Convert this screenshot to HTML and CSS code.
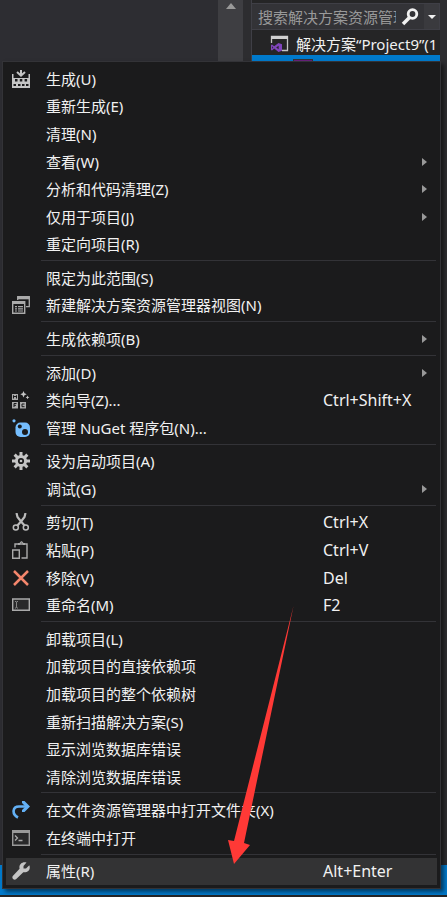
FILE: index.html
```html
<!DOCTYPE html>
<html lang="zh-CN">
<head>
<meta charset="utf-8">
<meta name="viewport" content="width=device-width, initial-scale=1">
<title>Project9</title>
<link rel="stylesheet" href="styles.css">
</head>
<body>
<main class="workspace">
  <section class="editor"></section>
  <div class="scrollbar"><span class="scroll-up"></span></div>
  <aside class="explorer">
    <form class="search">
      <input class="search-input" type="text" aria-label="搜索解决方案资源管理器" placeholder="搜索解决方案资源管理器(Ctrl+;)">
      <button class="search-button" type="button" aria-label="搜索">
        <svg width="18" height="18" viewBox="0 0 18 18"><circle cx="11.500" cy="6" r="4.300" fill="none" stroke="#f1f1f1" stroke-width="2.800"/><path d="M8.500 9.500L2 16" stroke="#f1f1f1" stroke-width="3.600"/></svg>
      </button>
      <button class="search-options" type="button" aria-label="搜索选项"><span class="caret"></span></button>
    </form>
    <div class="solution">
      <svg width="20" height="18" viewBox="0 0 20 18"><path d="M1.500 8V1.500h16v14H12" fill="none" stroke="#c5c5c5" stroke-width="1.300"/><path d="M1 1h17v3H1z" fill="#d0d0d0"/><path d="M8.500 8l3.500 1.200v6.600L8.500 17 4.200 13.600 2 15.500 1 15v-5l1-.6 2.200 1.900zM8.600 10.700L6.200 12.500l2.400 1.800zM2.200 11.300v2.400l1.100-1.200z" fill="#8145bd" fill-rule="evenodd"/></svg>
      <span>解决方案“Project9”(1</span>
    </div>
    <div class="selected-project"><span class="project-icon"></span></div>
  </aside>
</main>
<footer class="status"></footer>

<nav class="menu" aria-label="项目">
  <button class="item" type="button">
    <svg class="icon" viewBox="0 0 18 18"><path d="M9 0v5M5 2l4 3.700L13 2" fill="none" stroke="#c5c5c5" stroke-width="2"/><path d="M0 4h1.500v4H18V4v14H0z" fill="#c5c5c5"/><path d="M16.500 4H18v5h-1.500z" fill="#c5c5c5"/><path d="M3 9h2.500v2.500H3zM7.800 9h2.500v2.500H7.800zM12.600 9h2.500v2.500h-2.500zM1.500 14H4v2H1.500zM6 14h2.500v2H6zM10 14h2.500v2H10zM14 14h2.500v2H14z" fill="#1b1b1c"/></svg>
    <span class="label">生成(U)</span></button>
  <button class="item" type="button"><span class="label">重新生成(E)</span></button>
  <button class="item" type="button"><span class="label">清理(N)</span></button>
  <button class="item more" type="button"><span class="label">查看(W)</span></button>
  <button class="item more" type="button"><span class="label">分析和代码清理(Z)</span></button>
  <button class="item more" type="button"><span class="label">仅用于项目(J)</span></button>
  <button class="item" type="button"><span class="label">重定向项目(R)</span></button>
  <hr>
  <button class="item" type="button"><span class="label">限定为此范围(S)</span></button>
  <button class="item" type="button">
    <svg class="icon" viewBox="0 0 18 18"><path d="M5.700 4V.7h11.600v10H14" fill="none" stroke="#aaa" stroke-width="1.300"/><path d="M5.500 1h12v2.300h-12z" fill="#aaa"/><path d="M.7 5.700h12v11.600H.7z" fill="none" stroke="#aaa" stroke-width="1.400"/><path d="M1 6h11.500v2H1zM3 10h2v1.300H3zM6 10h5v1.300H6zM3 12.300h2v1.300H3zM6 12.300h5v1.300H6zM3 14.500h2v1H3zM6 14.500h5v1H6z" fill="#aaa"/></svg>
    <span class="label">新建解决方案资源管理器视图(N)</span></button>
  <hr>
  <button class="item more" type="button"><span class="label">生成依赖项(B)</span></button>
  <hr>
  <button class="item more" type="button"><span class="label">添加(D)</span></button>
  <button class="item" type="button">
    <svg class="icon" viewBox="0 0 18 18"><path d="M0 3h6v6H0zM0 11h6v6.500H0zM8 11h6v6.500H8z" fill="#aaa"/><path d="M1.500 7.500v-3l1.500 1.500 1.500-1.500v3M2 16v-3.500h2.500M2 14.300h2M12.500 13H10v2.700h2.500" fill="none" stroke="#1b1b1c"/><path d="M11.500 0l1 2.200 2.200 1-2.200 1-1 2.200-1-2.200-2.200-1 2.200-1zM15.500 4.500l.6 1.300 1.300.6-1.300.6-.6 1.300-.6-1.300-1.300-.6 1.300-.6z" fill="#c5c5c5"/></svg>
    <span class="label">类向导(Z)...</span><kbd>Ctrl+Shift+X</kbd></button>
  <button class="item" type="button">
    <svg class="icon" viewBox="0 0 18 18"><circle cx="2" cy="1.800" r="1.600" fill="#75beff"/><rect x="3.500" y="3.500" width="14.500" height="14.500" rx="5" fill="#75beff"/><circle cx="7.800" cy="7.500" r="2" fill="#1b1b1c"/><circle cx="13" cy="13" r="3" fill="#1b1b1c"/></svg>
    <span class="label">管理 NuGet 程序包(N)...</span></button>
  <hr>
  <button class="item" type="button">
    <svg class="icon" viewBox="0 0 18 18"><g stroke="#c5c5c5" stroke-width="3"><path d="M9 0v4M9 14v4M0 9h4M14 9h4M2.600 2.600l3 3M12.400 12.400l3 3M2.600 15.400l3-3M12.400 5.600l3-3"/></g><circle cx="9" cy="9" r="4.600" fill="#1b1b1c" stroke="#c5c5c5" stroke-width="3"/><circle cx="9" cy="9" r="1.300" fill="#c5c5c5"/></svg>
    <span class="label">设为启动项目(A)</span></button>
  <button class="item more" type="button"><span class="label">调试(G)</span></button>
  <hr>
  <button class="item" type="button">
    <svg class="icon" viewBox="0 0 18 18"><path d="M4.500 0l1 4L9 8.500l4.500 5M13.500 0l-1 4L9 8.500l-4.500 5" fill="none" stroke="#bbb" stroke-width="2.200"/><circle cx="3.800" cy="14.500" r="2.500" fill="#1b1b1c" stroke="#bbb" stroke-width="1.500"/><circle cx="13.800" cy="14.500" r="2.500" fill="#1b1b1c" stroke="#bbb" stroke-width="1.500"/></svg>
    <span class="label">剪切(T)</span><kbd>Ctrl+X</kbd></button>
  <button class="item" type="button">
    <svg class="icon" viewBox="0 0 18 18"><path d="M.7 9h6.600v8.300H.7zM3 6.500V3h12v14H9.500" fill="none" stroke="#aaa" stroke-width="1.400"/><path d="M6 4V2h1.500L9 .2h1L11.500 2H13v2H11L10 1.800H9L8 4z" fill="#aaa"/></svg>
    <span class="label">粘贴(P)</span><kbd>Ctrl+V</kbd></button>
  <button class="item" type="button">
    <svg class="icon" viewBox="0 0 18 18"><path d="M2 2l14 14M16 2L2 16" fill="none" stroke="#f4866c" stroke-width="2.500"/></svg>
    <span class="label">移除(V)</span><kbd>Del</kbd></button>
  <button class="item" type="button">
    <svg class="icon" viewBox="0 0 18 18"><path d="M.7 3h16.600v11.300H.7z" fill="#29292a" stroke="#aaa" stroke-width="1.400"/><path d="M3 5.500h1l.5.500.5-.5h1M4.500 6v5.500M3 12h1l.5-.5.5.5h1" fill="none" stroke="#858585"/></svg>
    <span class="label">重命名(M)</span><kbd>F2</kbd></button>
  <hr>
  <button class="item" type="button"><span class="label">卸载项目(L)</span></button>
  <button class="item" type="button"><span class="label">加载项目的直接依赖项</span></button>
  <button class="item" type="button"><span class="label">加载项目的整个依赖树</span></button>
  <button class="item" type="button"><span class="label">重新扫描解决方案(S)</span></button>
  <button class="item" type="button"><span class="label">显示浏览数据库错误</span></button>
  <button class="item" type="button"><span class="label">清除浏览数据库错误</span></button>
  <hr>
  <button class="item" type="button">
    <svg class="icon" viewBox="0 0 18 18"><path d="M6 16.500C-.5 13 .5 5.500 7 5.500h8" fill="none" stroke="#63b0f5" stroke-width="2.600"/><path d="M10 0h2.500L18 5.500 12.500 11H10V9l3.500-3.500L10 2z" fill="#63b0f5"/></svg>
    <span class="label">在文件资源管理器中打开文件夹(X)</span></button>
  <button class="item" type="button">
    <svg class="icon" viewBox="0 0 18 18"><path d="M.7 1.700h16.600v14.600H.7z" fill="#29292a" stroke="#999" stroke-width="1.400"/><path d="M1 2h16v2H1z" fill="#999"/><path d="M3 6.500L5.500 9 3 11.500M6.500 11.500h4" fill="none" stroke="#aaa" stroke-width="1.300"/></svg>
    <span class="label">在终端中打开</span></button>
  <hr>
  <button class="item active" type="button">
    <svg class="icon" viewBox="0 0 18 18"><path d="M14.500.6L11.500 4v2.500H14l3.300-3.300C19 7 16 11 11.300 10.200L4 17.300C2 18.800-.8 16 .8 14L7.600 6.800C6.500 2.500 10.500-1 14.500.6z" fill="#c5c5c5"/></svg>
    <span class="label">属性(R)</span><kbd>Alt+Enter</kbd></button>
</nav>
<svg class="pointer" viewBox="0 0 66 260" aria-hidden="true"><path d="M65.500 0L16 237l6 2-16 19-6-24 6 1z" fill="#ff3936"/></svg>
</body>
</html>
```
FILE: styles.css
```css
* {
  box-sizing: border-box;
}

body {
  position: relative;
  display: flex;
  flex-direction: column;
  min-height: 100vh;
  margin: 0;
  overflow: hidden;
  background: #2d2d30;
  color: #f1f1f1;
  font: 15px/20px "Noto Sans", "Noto Sans CJK SC", sans-serif;
}

button,
input {
  margin: 0;
  padding: 0;
  border: 0;
  background: none;
  color: inherit;
  font: inherit;
}

.workspace {
  display: flex;
  flex: 1;
}

.editor {
  flex: 1;
  background: #2d2d32;
}

.scrollbar {
  width: 25px;
  padding-top: 3px;
  background: #3e3e42;
}

.scroll-up {
  display: block;
  width: 10px;
  margin: 0 auto;
  border: 5px solid transparent;
  border-top: 0;
  border-bottom: 6px solid #999;
}

.explorer {
  width: 189px;
  margin: 0 7px 0 8px;
  padding-top: 3px;
  border-left: 1px solid #3f3f46;
  background: #252526;
}

.search {
  display: flex;
  height: 27px;
  border: 1px solid #3f3f46;
  border-left: 0;
  background: #333337;
}

.search-input {
  flex: 1;
  min-width: 0;
  margin-left: 6px;
  outline: 0;
}

.search-input::placeholder {
  color: #999;
  opacity: 1;
}

.search-button {
  display: flex;
  align-items: center;
  justify-content: center;
  width: 28px;
}

.search-options {
  width: 15px;
  background: #3a3a3e;
}

.caret {
  display: block;
  width: 8px;
  margin: 0 auto;
  border: 4px solid transparent;
  border-top-color: #f1f1f1;
  border-bottom: 0;
}

.solution {
  display: flex;
  align-items: center;
  gap: 6px;
  height: 25px;
  padding: 2px 0 0 18px;
  overflow: hidden;
  white-space: nowrap;
}

.solution svg {
  flex: none;
}

.selected-project {
  height: 25px;
  padding: 4px 0 0 41px;
  background: #007acc;
}

.project-icon {
  display: block;
  width: 20px;
  height: 16px;
  border: 1px solid #333337;
  background: #68217a;
}

.status {
  height: 32px;
  border-bottom: 2px solid #252526;
  background: #007acc;
}

.menu {
  position: absolute;
  inset: 61px 6px 8px 2px;
  display: flex;
  flex-direction: column;
  padding: 3px;
  border: 1px solid #333337;
  background: #1b1b1c;
  box-shadow: 3px 3px 4px rgba(0, 0, 0, 0.5);
}

.menu hr {
  flex: none;
  width: auto;
  height: 1px;
  margin: 2px 1px 3px 35px;
  border: 0;
  background: #333337;
}

.item {
  display: grid;
  flex: 1;
  grid-template-columns: 40px 1fr 114px;
  align-items: center;
  min-height: 0;
  text-align: left;
  white-space: nowrap;
}

.active {
  background: #333334;
}

.icon {
  grid-area: 1 / 1;
  width: 18px;
  height: 18px;
  margin-left: 6px;
}

.label {
  grid-area: 1 / 2;
}

.item kbd {
  grid-area: 1 / 3;
  font: inherit;
  font-size: 16px;
}

.more::after {
  grid-area: 1 / 3;
  justify-self: end;
  margin-right: 10px;
  border: 4px solid transparent;
  border-right: 0;
  border-left: 5px solid #999;
  content: "";
}

.pointer {
  position: absolute;
  right: 153px;
  bottom: 31px;
  width: 66px;
  height: 260px;
  pointer-events: none;
}
```
